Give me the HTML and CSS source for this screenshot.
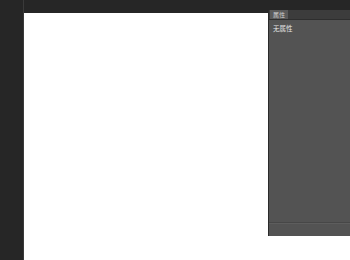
FILE: index.html
```html
<!DOCTYPE html>
<html lang="zh">
  <head>
    <meta charset="UTF-8" />
    <title>属性</title>
    <link rel="stylesheet" href="styles.css">
  </head>
  <body>
    <div class="workspace">
      <div class="toolbar"></div>
      <div class="canvas-area">
        <div class="canvas"></div>
      </div>
      <!-- Properties panel -->
      <div class="panel">
        <div class="tabs">
          <div class="tab">属性</div>
        </div>
        <div class="panel-body">
          <div class="empty">无属性</div>
        </div>
        <div class="panel-footer"></div>
      </div>
    </div>
  </body>
</html>
```

FILE: styles.css
```css
body {
  margin: 0;
  background-color: #262626;
  font-family: "Noto Sans CJK SC", sans-serif;
  width: 350px;
  height: 260px;
  overflow: hidden;
}
.workspace {
  position: relative;
  width: 350px;
  height: 260px;
  display: flex;
}
.toolbar {
  width: 24px;
  background-color: #262626;
  border-right: 1px solid #3a3a3a;
  box-sizing: border-box;
}
.canvas-area {
  flex: 1;
  padding-top: 13px;
}
.canvas {
  background-color: #fff;
  height: 100%;
}
.panel {
  position: absolute;
  left: 268px;
  top: 10px;
  width: 82px;
  height: 226px;
  background-color: #535353;
  border-left: 1px solid #2a2a2a;
  box-sizing: border-box;
  display: flex;
  flex-direction: column;
}
.tabs {
  height: 9px;
  background-color: #3c3c3c;
  border-bottom: 1px solid #2e2e2e;
  display: flex;
  padding-left: 1px;
}
.tab {
  background-color: #5a5a5a;
  color: #cfcfcf;
  font-size: 6px;
  line-height: 9px;
  padding: 0 3px;
}
.panel-body {
  flex: 1;
  border-bottom: 1px solid #474747;
}
.empty {
  color: #e6e6e6;
  font-size: 6.5px;
  padding: 3px 0 0 4px;
  line-height: 10px;
}
.panel-footer {
  height: 12px;
  border-top: 1px solid #5d5d5d;
}
```
